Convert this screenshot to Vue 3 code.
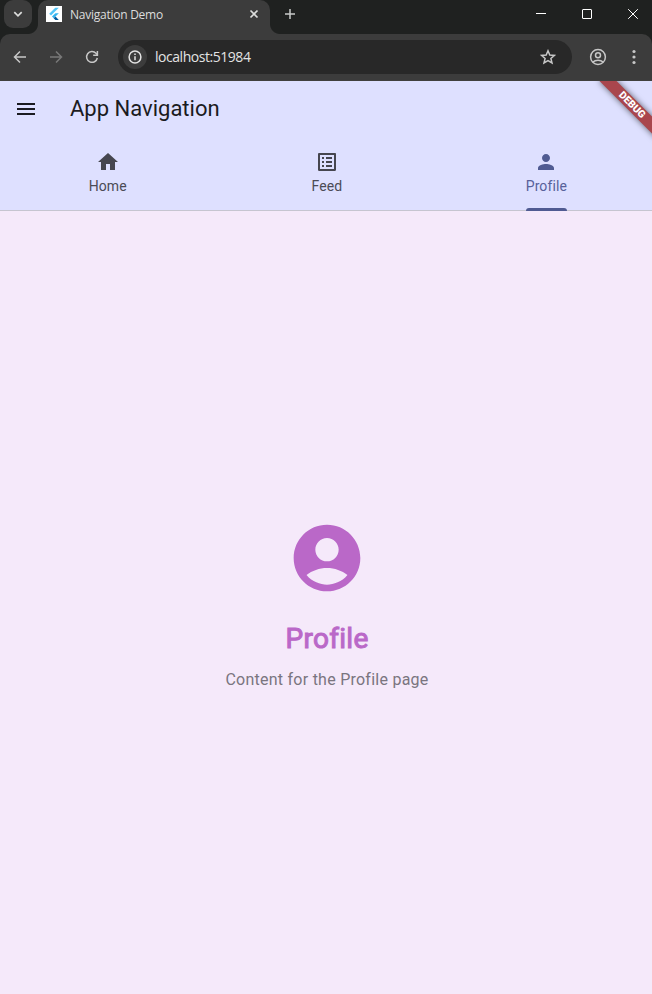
<script setup>
const tabs = [
  { label: 'Home', path: 'M10 20v-6h4v6h5v-8h3L12 3 2 12h3v8z' },
  {
    label: 'Feed',
    path: 'M19 5v14H5V5h14m1.1-2H3.9c-.5 0-.9.4-.9.9v16.2c0 .4.4.9.9.9h16.2c.4 0 .9-.5.9-.9V3.9c0-.5-.5-.9-.9-.9zM11 7h6v2h-6V7zm0 4h6v2h-6v-2zm0 4h6v2h-6zM7 7h2v2H7zm0 4h2v2H7zm0 4h2v2H7z',
  },
  {
    label: 'Profile',
    active: true,
    path: 'M12 12c2.21 0 4-1.79 4-4s-1.79-4-4-4-4 1.79-4 4 1.79 4 4 4zm0 2c-2.67 0-8 1.34-8 4v2h16v-2c0-2.66-5.33-4-8-4z',
  },
]
</script>

<template>
  <div class="window">
    <div class="tabstrip">
      <div class="search-tabs">
        <svg width="10" height="10" viewBox="0 0 10 10"><path d="M1.3 3.2 5 6.8l3.700-3.600" class="line heavy" /></svg>
      </div>
      <div class="browser-tab">
        <span class="favicon">
          <svg width="16" height="16" viewBox="0 0 16 16">
            <path d="M9.300 1.800h3.500L5 9.500 3.200 7.800z" fill="#54c5f8" />
            <path d="M9.300 7.200h3.500L9.500 10.500l-1.800 1.700L6 10.500z" fill="#35b4f0" />
            <path d="m7.700 12.200 1.800-1.700 3.300 3.400H9.400z" fill="#01579b" />
          </svg>
        </span>
        <span class="tab-title">Navigation Demo</span>
        <svg class="tab-close" width="10" height="10" viewBox="0 0 10 10"><path d="m1.500 1.500 7 7m0-7-7 7" class="line heavy" /></svg>
      </div>
      <svg class="new-tab" width="12" height="12" viewBox="0 0 12 12"><path d="M6 1v10M1 6h10" class="line" /></svg>
      <div class="controls">
        <svg width="12" height="12" viewBox="0 0 12 12"><path d="M1 5.500h10" class="thin" /></svg>
        <svg width="12" height="12" viewBox="0 0 12 12"><rect x="1.500" y="1.500" width="9" height="9" rx="0.500" class="thin" /></svg>
        <svg width="12" height="12" viewBox="0 0 12 12"><path d="m1.200 1.200 9.600 9.600m0-9.600-9.600 9.600" class="thin" /></svg>
      </div>
    </div>

    <div class="toolbar">
      <svg class="nav-icon" width="16" height="16" viewBox="0 0 16 16"><path d="M14 8H2.800M8 2.500 2.500 8 8 13.500" class="line" /></svg>
      <svg class="nav-icon dim" width="16" height="16" viewBox="0 0 16 16"><path d="M2 8h11.200M8 2.500 13.500 8 8 13.500" class="line" /></svg>
      <svg class="nav-icon" width="16" height="16" viewBox="0 0 16 16">
        <path d="M13.300 9A5.400 5.400 0 1 1 12 4.300l1.200 1.300" class="line" />
        <path d="M13.400 2v4.200H9.200" class="line" />
      </svg>
      <div class="omnibox">
        <span class="site-info">
          <svg width="14" height="14" viewBox="0 0 14 14">
            <circle cx="7" cy="7" r="5.900" class="line" />
            <path d="M7 6.200v4M7 3.600v1.400" class="line" />
          </svg>
        </span>
        <span class="url">localhost:51984</span>
        <svg class="star" width="16" height="16" viewBox="0 0 16 16">
          <path d="m8 1.800 1.800 4.200 4.600.4-3.500 3 1.100 4.500-4-2.400-4 2.400 1.100-4.500-3.500-3 4.600-.4z" class="line" />
        </svg>
      </div>
      <svg class="account" width="18" height="18" viewBox="0 0 18 18">
        <circle cx="9" cy="9" r="7.400" class="line" />
        <circle cx="9" cy="7.200" r="2.500" class="line" />
        <path d="M3.800 14c2.800-2.500 7.600-2.500 10.400 0" class="line" />
      </svg>
      <svg class="more" width="4" height="16" viewBox="0 0 4 16">
        <circle cx="2" cy="2.500" r="1.600" /><circle cx="2" cy="8" r="1.600" /><circle cx="2" cy="13.500" r="1.600" />
      </svg>
    </div>

    <div class="app">
      <header class="app-bar">
        <div class="title-row">
          <svg width="24" height="24" viewBox="0 0 24 24"><path d="M3 18h18v-2H3v2zm0-5h18v-2H3v2zm0-7v2h18V6H3z" /></svg>
          <h1>App Navigation</h1>
        </div>
        <nav class="tabs">
          <div v-for="tab in tabs" :key="tab.label" class="tab" :class="{ active: tab.active }">
            <div class="tab-body">
              <svg width="24" height="24" viewBox="0 0 24 24"><path :d="tab.path" /></svg>
              <span>{{ tab.label }}</span>
            </div>
          </div>
        </nav>
      </header>
      <main class="page">
        <svg width="80" height="80" viewBox="0 0 24 24">
          <path fill-rule="evenodd" d="M12 2C6.480 2 2 6.480 2 12s4.480 10 10 10 10-4.480 10-10S17.520 2 12 2zm0 4c1.930 0 3.500 1.570 3.500 3.500S13.930 13 12 13s-3.500-1.570-3.500-3.500S10.070 6 12 6zm0 14c-2.030 0-4.430-.820-6.140-2.880C7.550 15.800 9.680 15 12 15s4.450.800 6.140 2.120C16.430 19.180 14.030 20 12 20z" />
        </svg>
        <h2>Profile</h2>
        <p>Content for the Profile page</p>
      </main>
      <div class="debug">DEBUG</div>
    </div>
  </div>
</template>

<style>
body {
  margin: 0;
}
</style>

<style scoped>
.window {
  width: 652px;
  height: 994px;
  display: flex;
  flex-direction: column;
  overflow: hidden;
  background: #1f2120;
}
svg {
  display: block;
  flex: none;
}
.line {
  fill: none;
  stroke: currentColor;
  stroke-width: 1.5;
}
.heavy {
  stroke-width: 1.7;
}
.thin {
  fill: none;
  stroke: #fff;
  stroke-width: 1;
}
.tabstrip {
  height: 34px;
  flex: none;
  display: flex;
  background: #1f2120;
  color: #dcdddc;
  font-family: "Open Sans", "Noto Sans", sans-serif;
}
.search-tabs {
  width: 28px;
  height: 28px;
  margin: 0 6px 0 4px;
  border-radius: 9px;
  background: #3c3c3c;
  display: flex;
  align-items: center;
  justify-content: center;
}
.browser-tab {
  position: relative;
  box-sizing: border-box;
  width: 232px;
  height: 34px;
  padding: 0 11px 6px 8px;
  border-radius: 10px 10px 0 0;
  background: #3c3c3c;
  display: flex;
  align-items: center;
}
.browser-tab::before,
.browser-tab::after {
  content: "";
  position: absolute;
  bottom: 0;
  width: 10px;
  height: 10px;
}
.browser-tab::before {
  left: -10px;
  background: radial-gradient(circle at 0 0, transparent 9.5px, #3c3c3c 10.5px);
}
.browser-tab::after {
  right: -10px;
  background: radial-gradient(circle at 100% 0, transparent 9.5px, #3c3c3c 10.5px);
}
.favicon {
  width: 16px;
  height: 16px;
  margin-right: 8px;
  background: #fff;
}
.tab-title {
  flex: 1;
  font-size: 12px;
  line-height: 16px;
  padding-top: 2px;
  letter-spacing: -0.25px;
  white-space: nowrap;
}
.new-tab {
  margin: 8px 0 0 14px;
  color: #c9cac9;
}
.controls {
  display: flex;
  gap: 34px;
  margin: 8px 13px 0 auto;
}
.toolbar {
  height: 47px;
  flex: none;
  box-sizing: border-box;
  border-bottom: 1px solid #40403e;
  border-radius: 10px 10px 0 0;
  background: #3c3c3c;
  color: #c7c7c7;
  display: flex;
  align-items: center;
  padding-left: 12px;
}
.nav-icon {
  margin-right: 20px;
}
.nav-icon.dim {
  color: #787878;
}
.omnibox {
  box-sizing: border-box;
  width: 454px;
  height: 34px;
  margin-left: -2px;
  padding: 0 16px 0 5px;
  border-radius: 17px;
  background: #282828;
  display: flex;
  align-items: center;
}
.site-info {
  width: 24px;
  height: 24px;
  margin-right: 8px;
  border-radius: 50%;
  background: #3c3c3c;
  color: #e3e3e3;
  display: flex;
  align-items: center;
  justify-content: center;
}
.url {
  flex: 1;
  color: #e3e3e3;
  font: 14px/20px "Open Sans", "Noto Sans", sans-serif;
  letter-spacing: -0.46px;
}
.account {
  margin-left: 17px;
}
.more {
  margin-left: 25px;
  fill: currentColor;
}
.app {
  position: relative;
  flex: 1;
  display: flex;
  flex-direction: column;
  overflow: hidden;
  font-family: Roboto, sans-serif;
}
.app-bar {
  height: 130px;
  flex: none;
  box-sizing: border-box;
  border-bottom: 1px solid #c6c5d0;
  background: #dee0ff;
}
.title-row {
  height: 56px;
  padding-left: 14px;
  display: flex;
  align-items: center;
  gap: 32px;
  color: #1b1b21;
  fill: #1b1b21;
}
h1 {
  margin: 0;
  font-size: 22px;
  line-height: 28px;
  font-weight: 400;
}
.tabs {
  width: 658px;
  height: 74px;
  margin-left: -2px;
  display: grid;
  grid-template-columns: repeat(3, 1fr);
}
.tab {
  display: flex;
  justify-content: center;
  color: #4b4b55;
  fill: #46464f;
}
.tab-body {
  box-sizing: border-box;
  height: 74px;
  padding-top: 13px;
  display: flex;
  flex-direction: column;
  align-items: center;
  font-size: 14px;
  line-height: 20px;
  letter-spacing: 0.1px;
}
.tab-body span {
  margin-top: 2px;
}
.active {
  color: #57619a;
  fill: #505b92;
}
.active .tab-body::after {
  content: "";
  width: 100%;
  height: 3px;
  margin-top: 12px;
  border-radius: 3px 3px 0 0;
  background: #505b92;
}
.page {
  flex: 1;
  padding: 307px 0 0 2px;
  background: #f5e9fa;
  display: flex;
  flex-direction: column;
  align-items: center;
  fill: #ba68c8;
}
h2 {
  margin: 23px 0 0;
  color: #ba68c8;
  font-size: 28px;
  line-height: 36px;
  font-weight: 400;
  letter-spacing: 0.3px;
  -webkit-text-stroke: 1px #ba68c8;
}
p {
  margin: 11px 0 0;
  color: #7a757f;
  font-size: 16px;
  line-height: 24px;
  letter-spacing: 0.25px;
}
.debug {
  position: absolute;
  top: 18px;
  left: 592px;
  width: 80px;
  height: 12px;
  background: #a9464d;
  box-shadow: 0 0 6px rgba(0, 0, 0, 0.6);
  color: #fff;
  font-size: 10.2px;
  line-height: 12px;
  font-weight: 900;
  text-align: center;
  transform: rotate(45deg);
}
</style>
